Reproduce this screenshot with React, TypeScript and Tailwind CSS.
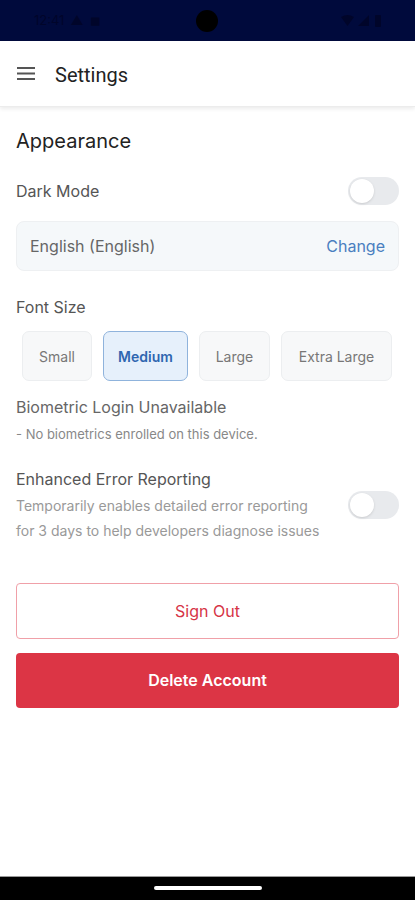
import React, { useState } from 'react';

const sizes = [
  { label: 'Small', w: 'w-[70px]' },
  { label: 'Medium', w: 'w-[85px]' },
  { label: 'Large', w: 'w-[71px]' },
  { label: 'Extra Large', w: 'w-[111px]' },
];

function Toggle({ on, onClick }: { on: boolean; onClick: () => void }) {
  return (
    <button
      onClick={onClick}
      className={`w-[51px] h-[28px] rounded-full p-[2px] flex items-center shrink-0 ${on ? 'bg-[#3b82f6] justify-end' : 'bg-[#e8eaed] justify-start'}`}
    >
      <span className="w-[24px] h-[24px] rounded-full bg-white shadow-sm" />
    </button>
  );
}

export default function App() {
  const [dark, setDark] = useState(false);
  const [errors, setErrors] = useState(false);
  const [size, setSize] = useState('Medium');

  return (
    <div className="w-[415px] h-[900px] flex flex-col bg-white overflow-hidden" style={{ fontFamily: 'Inter, "Noto Sans", sans-serif' }}>
      {/* status bar */}
      <div className="h-[41px] bg-[#000a3c] flex items-center justify-between px-[34px] relative">
        <div className="flex items-center gap-[6px] text-[13px] text-[#00052a]">
          <span>12:41</span>
          <span>▲</span>
          <span>◼</span>
        </div>
        <div className="absolute left-[196px] top-[10px] w-[22px] h-[22px] rounded-full bg-black" />
        <div className="flex items-center gap-[4px]">
          <svg width="13" height="11" viewBox="0 0 13 11"><path d="M0 2 Q6.5 -2 13 2 L6.5 11 Z" fill="#00052a" /></svg>
          <svg width="11" height="11" viewBox="0 0 11 11"><path d="M0 11 L11 0 L11 11 Z" fill="#00052a" /></svg>
          <div className="w-[6px] h-[12px] bg-[#00052a] rounded-[1px] ml-[2px]" />
        </div>
      </div>

      {/* app bar */}
      <div className="h-[66px] flex items-center px-[17px] gap-[20px] shadow-[0_2px_4px_rgba(0,0,0,0.08)] border-b border-[#ececec] relative z-10">
        <svg width="18" height="13" viewBox="0 0 18 13" className="shrink-0">
          <rect x="0" y="0" width="18" height="2" fill="#555" />
          <rect x="0" y="5.5" width="18" height="2" fill="#555" />
          <rect x="0" y="11" width="18" height="2" fill="#555" />
        </svg>
        <h1 className="text-[20px] text-[#222] font-normal pt-[2px]" style={{ fontFamily: 'Roboto, sans-serif' }}>Settings</h1>
      </div>

      {/* content */}
      <div className="flex-1 px-[16px] pt-[21px] flex flex-col">
        <h2 className="text-[20px] text-[#222] font-normal leading-[26px]">Appearance</h2>

        <div className="flex items-center justify-between mt-[23px]">
          <span className="text-[16px] text-[#555]">Dark Mode</span>
          <Toggle on={dark} onClick={() => setDark(!dark)} />
        </div>

        <div className="mt-[16px] h-[50px] rounded-[8px] bg-[#f5f8fa] border border-[#eef0f2] flex items-center justify-between px-[13px]">
          <span className="text-[16px] text-[#666]">English (English)</span>
          <button className="text-[16px] text-[#4a7fc0]">Change</button>
        </div>

        <div className="mt-[24px] text-[16px] text-[#555]">Font Size</div>

        <div className="mt-[12px] flex gap-[11px] px-[6px]">
          {sizes.map((s) => {
            const active = s.label === size;
            return (
              <button
                key={s.label}
                onClick={() => setSize(s.label)}
                className={`${s.w} h-[50px] rounded-[7px] border text-[14px] ${active ? 'bg-[#e6f0fb] border-[#8fb3dc] text-[#2f66b0] font-semibold' : 'bg-[#f7f8f9] border-[#eceef0] text-[#777]'}`}
              >
                {s.label}
              </button>
            );
          })}
        </div>

        <div className="mt-[14px] text-[16px] text-[#666]">Biometric Login Unavailable</div>
        <div className="mt-[6px] text-[13px] text-[#888]">- No biometrics enrolled on this device.</div>

        <div className="mt-[22px] flex items-center justify-between">
          <div className="flex flex-col">
            <span className="text-[16px] text-[#555]">Enhanced Error Reporting</span>
            <span className="mt-[2px] text-[14px] leading-[25px] text-[#999] w-[310px]">
              Temporarily enables detailed error reporting for 3 days to help developers diagnose issues
            </span>
          </div>
          <Toggle on={errors} onClick={() => setErrors(!errors)} />
        </div>

        <button className="mt-[40px] h-[56px] rounded-[4px] border border-[#f0a0a8] bg-white text-[#d63446] text-[16px]">
          Sign Out
        </button>
        <button className="mt-[14px] h-[55px] rounded-[4px] bg-[#dc3545] text-white text-[16px] font-semibold">
          Delete Account
        </button>
      </div>

      {/* nav bar */}
      <div className="h-[24px] bg-black border-t border-[#999] flex items-start justify-center pt-[9px]">
        <div className="w-[108px] h-[4px] rounded-full bg-white" />
      </div>
    </div>
  );
}
